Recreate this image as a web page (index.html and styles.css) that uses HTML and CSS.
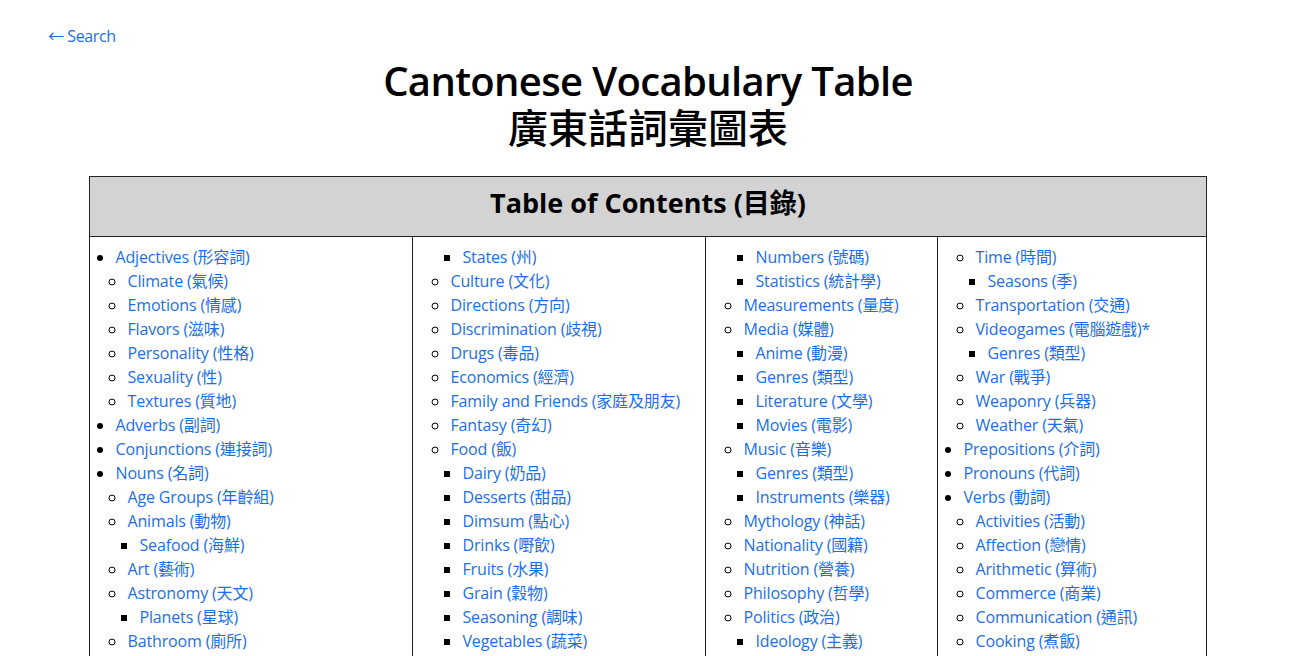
FILE: index.html
```html
<!DOCTYPE html>
<html lang="yue-Hant">
<head>
<meta charset="utf-8">
<title>Cantonese Vocabulary Table 廣東話詞彙圖表</title>
<link rel="stylesheet" href="styles.css">
</head>
<body>
<nav class="back"><a href="#">← Search</a></nav>
<h1 class="title">Cantonese Vocabulary Table<br><span class="title-zh">廣東話詞彙圖表</span></h1>
<table class="toc">
  <colgroup>
    <col class="c1"><col class="c2"><col class="c3"><col class="c4">
  </colgroup>
  <thead>
    <tr><th colspan="4">Table of Contents (目錄)</th></tr>
  </thead>
  <tbody>
    <tr>
      <td>
        <ul class="list">
          <li class="l1"><a href="#">Adjectives (形容詞)</a></li>
          <li class="l2"><a href="#">Climate (氣候)</a></li>
          <li class="l2"><a href="#">Emotions (情感)</a></li>
          <li class="l2"><a href="#">Flavors (滋味)</a></li>
          <li class="l2"><a href="#">Personality (性格)</a></li>
          <li class="l2"><a href="#">Sexuality (性)</a></li>
          <li class="l2"><a href="#">Textures (質地)</a></li>
          <li class="l1"><a href="#">Adverbs (副詞)</a></li>
          <li class="l1"><a href="#">Conjunctions (連接詞)</a></li>
          <li class="l1"><a href="#">Nouns (名詞)</a></li>
          <li class="l2"><a href="#">Age Groups (年齡組)</a></li>
          <li class="l2"><a href="#">Animals (動物)</a></li>
          <li class="l3"><a href="#">Seafood (海鮮)</a></li>
          <li class="l2"><a href="#">Art (藝術)</a></li>
          <li class="l2"><a href="#">Astronomy (天文)</a></li>
          <li class="l3"><a href="#">Planets (星球)</a></li>
          <li class="l2"><a href="#">Bathroom (廁所)</a></li>
        </ul>
      </td>
      <td>
        <ul class="list">
          <li class="l3"><a href="#">States (州)</a></li>
          <li class="l2"><a href="#">Culture (文化)</a></li>
          <li class="l2"><a href="#">Directions (方向)</a></li>
          <li class="l2"><a href="#">Discrimination (歧視)</a></li>
          <li class="l2"><a href="#">Drugs (毒品)</a></li>
          <li class="l2"><a href="#">Economics (經濟)</a></li>
          <li class="l2"><a href="#">Family and Friends (家庭及朋友)</a></li>
          <li class="l2"><a href="#">Fantasy (奇幻)</a></li>
          <li class="l2"><a href="#">Food (飯)</a></li>
          <li class="l3"><a href="#">Dairy (奶品)</a></li>
          <li class="l3"><a href="#">Desserts (甜品)</a></li>
          <li class="l3"><a href="#">Dimsum (點心)</a></li>
          <li class="l3"><a href="#">Drinks (嘢飲)</a></li>
          <li class="l3"><a href="#">Fruits (水果)</a></li>
          <li class="l3"><a href="#">Grain (穀物)</a></li>
          <li class="l3"><a href="#">Seasoning (調味)</a></li>
          <li class="l3"><a href="#">Vegetables (蔬菜)</a></li>
        </ul>
      </td>
      <td>
        <ul class="list">
          <li class="l3"><a href="#">Numbers (號碼)</a></li>
          <li class="l3"><a href="#">Statistics (統計學)</a></li>
          <li class="l2"><a href="#">Measurements (量度)</a></li>
          <li class="l2"><a href="#">Media (媒體)</a></li>
          <li class="l3"><a href="#">Anime (動漫)</a></li>
          <li class="l3"><a href="#">Genres (類型)</a></li>
          <li class="l3"><a href="#">Literature (文學)</a></li>
          <li class="l3"><a href="#">Movies (電影)</a></li>
          <li class="l2"><a href="#">Music (音樂)</a></li>
          <li class="l3"><a href="#">Genres (類型)</a></li>
          <li class="l3"><a href="#">Instruments (樂器)</a></li>
          <li class="l2"><a href="#">Mythology (神話)</a></li>
          <li class="l2"><a href="#">Nationality (國籍)</a></li>
          <li class="l2"><a href="#">Nutrition (營養)</a></li>
          <li class="l2"><a href="#">Philosophy (哲學)</a></li>
          <li class="l2"><a href="#">Politics (政治)</a></li>
          <li class="l3"><a href="#">Ideology (主義)</a></li>
        </ul>
      </td>
      <td>
        <ul class="list">
          <li class="l2"><a href="#">Time (時間)</a></li>
          <li class="l3"><a href="#">Seasons (季)</a></li>
          <li class="l2"><a href="#">Transportation (交通)</a></li>
          <li class="l2"><a href="#">Videogames (電腦遊戲)*</a></li>
          <li class="l3"><a href="#">Genres (類型)</a></li>
          <li class="l2"><a href="#">War (戰爭)</a></li>
          <li class="l2"><a href="#">Weaponry (兵器)</a></li>
          <li class="l2"><a href="#">Weather (天氣)</a></li>
          <li class="l1"><a href="#">Prepositions (介詞)</a></li>
          <li class="l1"><a href="#">Pronouns (代詞)</a></li>
          <li class="l1"><a href="#">Verbs (動詞)</a></li>
          <li class="l2"><a href="#">Activities (活動)</a></li>
          <li class="l2"><a href="#">Affection (戀情)</a></li>
          <li class="l2"><a href="#">Arithmetic (算術)</a></li>
          <li class="l2"><a href="#">Commerce (商業)</a></li>
          <li class="l2"><a href="#">Communication (通訊)</a></li>
          <li class="l2"><a href="#">Cooking (煮飯)</a></li>
        </ul>
      </td>
    </tr>
  </tbody>
</table>
</body>
</html>
```
FILE: styles.css
```css
html, body {
  margin: 0;
  padding: 0;
  background: #ffffff;
}

body {
  font-family: "Open Sans", "Noto Sans CJK TC", sans-serif;
  font-size: 16px;
  line-height: 24px;
  color: #000000;
  padding: 24px 48px 0;
}

a {
  color: #1a6fe8;
  text-decoration: none;
}

.back {
  height: 24px;
  letter-spacing: -0.4px;
}

.title {
  margin: 9px 0 0;
  text-align: center;
  font-size: 40px;
  line-height: 47px;
  font-weight: 600;
  letter-spacing: -0.65px;
}

.title-zh {
  font-weight: 500;
  letter-spacing: 0;
}

.toc {
  width: 1116px;
  margin: 25px auto 0;
  border-collapse: collapse;
  table-layout: fixed;
}

.c1 { width: 323px; }
.c2 { width: 293px; }
.c3 { width: 232px; }
.c4 { width: 268px; }

.toc th {
  background: #d3d3d3;
  border: 1px solid #222222;
  font-size: 27px;
  line-height: 34px;
  font-weight: 700;
  padding: 9px 0 16px;
}

.toc td {
  border: 1px solid #222222;
  vertical-align: top;
  padding: 8px 4px 8px 0;
}

.list {
  margin: 0;
  padding: 0;
  white-space: nowrap;
  letter-spacing: -0.15px;
}

.list li {
  line-height: 24px;
}

.l1 {
  list-style-type: disc;
  margin-left: 25px;
}

.l2 {
  list-style-type: circle;
  margin-left: 37px;
}

.l3 {
  list-style-type: square;
  margin-left: 49px;
}
```
